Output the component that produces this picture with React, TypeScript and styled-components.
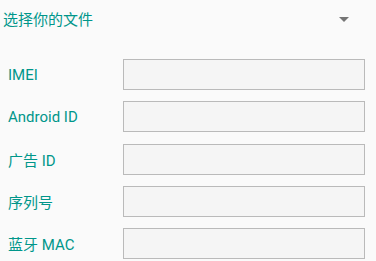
import React from "react";
import styled, { createGlobalStyle } from "styled-components";

const Global = createGlobalStyle`
  html, body { margin: 0; padding: 0; background: #fafafa; }
  body { font-family: Roboto, "Noto Sans CJK SC", sans-serif; }
`;

const Page = styled.div`
  width: 376px;
  height: 261px;
  overflow: hidden;
  background: #fafafa;
`;

const Header = styled.div`
  display: flex;
  align-items: center;
  justify-content: space-between;
  height: 40px;
  padding: 0 27px 0 3px;
`;

const Title = styled.span`
  font-size: 15px;
  color: #00968a;
  line-height: 1;
`;

const Arrow = styled.span`
  width: 0;
  height: 0;
  border-left: 5px solid transparent;
  border-right: 5px solid transparent;
  border-top: 5px solid #757575;
  margin-top: -2px;
`;

const Form = styled.div`
  display: flex;
  flex-direction: column;
  gap: 11.25px;
  padding: 19px 11px 0 8px;
`;

const Row = styled.div`
  display: grid;
  grid-template-columns: 115px 1fr;
  align-items: center;
  height: 31px;
`;

const Label = styled.span`
  font-size: 15px;
  color: #00968a;
`;

const Field = styled.input`
  box-sizing: border-box;
  height: 31px;
  width: 100%;
  margin: 0;
  border: 1px solid #bababa;
  border-bottom-width: 1.5px;
  background: #f5f5f5;
  outline: none;
  border-radius: 0;
  padding: 0 6px;
  font-family: inherit;
`;

const labels = ["IMEI", "Android ID", "广告 ID", "序列号", "蓝牙 MAC"];

export default function App() {
  return (
    <Page>
      <Global />
      <Header>
        <Title>选择你的文件</Title>
        <Arrow />
      </Header>
      <Form>
        {labels.map((l) => (
          <Row key={l}>
            <Label>{l}</Label>
            <Field />
          </Row>
        ))}
      </Form>
    </Page>
  );
}
